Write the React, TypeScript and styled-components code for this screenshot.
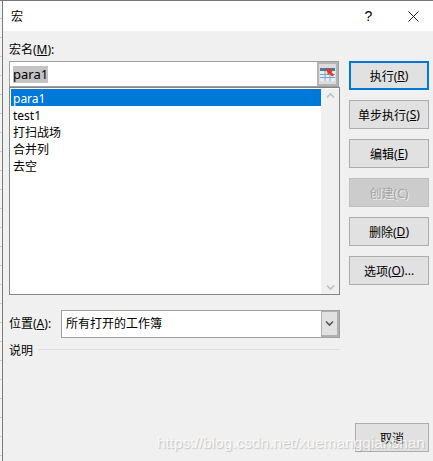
import React from "react";
import styled, { createGlobalStyle } from "styled-components";

const Global = createGlobalStyle`
  html, body { margin: 0; padding: 0; background: #fff; }
  * { box-sizing: border-box; }
`;
const Page = styled.div`
  position: relative; width: 433px; height: 461px; overflow: hidden;
  padding: 1px 0 0 2px;
  background:
    linear-gradient(#777, #777) top / 100% 1px no-repeat,
    repeating-linear-gradient(180deg, #f4f4f4 0 18px, #c8c8c8 18px 19px);
  font-family: "Noto Sans", "Noto Sans CJK SC", sans-serif; font-size: 12px; color: #000;
`;
const Dialog = styled.div`
  width: 431px; height: 460px; display: flex; flex-direction: column;
  background: #f0f0f0; border-left: 1px solid #7a7a7a;
`;
const TitleBar = styled.div`
  height: 30px; flex: none; background: #fff; display: flex; align-items: center; padding: 0 14px 0 8px;
`;
const Title = styled.div`flex: 1; font-size: 12px;`;
const Help = styled.span`font-size: 14px; width: 17px; text-align: center; margin-right: 31px; font-family: "Liberation Sans", sans-serif;`;
const Body = styled.div`flex: 1; display: flex; padding: 11px 4px 9px 6px; gap: 9px;`;
const Left = styled.div`width: 331px; display: flex; flex-direction: column;`;
const FieldLabel = styled.div`height: 19px; line-height: 15px;`;
const NameInput = styled.div`
  height: 26px; display: flex; align-items: center; background: #fff;
  border: 1px solid #a0a0a0; padding-left: 3px; width: 330px; justify-content: space-between;
`;
const Selected = styled.span`background: #c4c4c4; font-size: 13px; line-height: 17px; padding: 0;`;
const Picker = styled.div`
  width: 21px; height: 24px; background: #dcdcdc; border: 2px solid #b4b4b4; display: flex; align-items: center; justify-content: center;
`;
const List = styled.div`
  height: 208px; width: 331px; display: flex; background: #fff; border: 1px solid #82858a; padding: 1px 0 0 1px;
`;
const Items = styled.div`flex: 1; display: flex; flex-direction: column;`;
const Item = styled.div<{ $on?: boolean }>`
  height: 17px; line-height: 19px; padding-left: 2px;
  background: ${p => (p.$on ? "#0078d7" : "transparent")}; color: ${p => (p.$on ? "#fff" : "#000")};
`;
const Scroll = styled.div`
  width: 18px; background: #f0f0f0; display: flex; flex-direction: column; justify-content: space-between; align-items: center; padding: 3px 0;
`;
const LocationRow = styled.div`display: flex; align-items: center; margin-top: 15px; height: 28px;`;
const LocationLabel = styled.div`width: 52px; flex: none; line-height: 15px; margin-bottom: 2px;`;
const Combo = styled.div`
  width: 279px; height: 28px; display: flex; background: #fff; border: 1px solid #a0a0a0; line-height: 25px; padding-left: 4px;
`;
const ComboValue = styled.div`flex: 1;`;
const ComboButton = styled.div`
  width: 18px; background: #e1e1e1; border: 1px solid #b0b0b0; border-bottom-width: 2px; border-right-width: 2px; display: flex; align-items: center; justify-content: center;
`;
const Desc = styled.div`display: flex; align-items: center; gap: 5px; height: 15px; margin-top: 4px;`;
const Rule = styled.div`flex: 1; height: 1px; background: #dcdcdc;`;
const Right = styled.div`flex: 1; display: flex; flex-direction: column; gap: 10px; align-items: flex-end; padding-top: 19px;`;
const Btn = styled.div<{ $primary?: boolean; $off?: boolean; $cancel?: boolean }>`
  height: 29px; width: ${p => (p.$cancel ? 74 : 80)}px; display: flex; align-items: center; justify-content: center;
  background: ${p => (p.$off ? "#cccccc" : "#e1e1e1")};
  border: ${p => (p.$primary ? "2px solid #0078d7" : p.$off ? "1px solid #bfbfbf" : "1px solid #adadad")};
  color: ${p => (p.$off ? "#a3a3a3" : "#000")};
  text-shadow: ${p => (p.$off ? "1px 1px 0 #eee" : "none")};
  margin-top: ${p => (p.$cancel ? "auto" : "0")};
`;
const Key = styled.span`text-decoration: underline;`;
const Watermark = styled.div`
  position: absolute; left: 157px; top: 433px; font-family: "Liberation Sans", sans-serif; font-size: 15.4px; line-height: 20px;
  color: rgba(255,255,255,.8); text-shadow: 1px 1px 1px rgba(150,150,150,.5); white-space: nowrap; pointer-events: none;
`;

const Chev = ({ up, color = "#c0c0c0" }: { up?: boolean; color?: string }) => (
  <svg width="9" height="7" viewBox="0 0 9 7">
    <path d={up ? "M1 5.5L4.5 2L8 5.5" : "M1 1.5L4.5 5L8 1.5"} fill="none" stroke={color} strokeWidth="1.6" />
  </svg>
);
const RangeIcon = () => (
  <svg width="15" height="14" viewBox="0 0 15 14">
    <rect x="0" y="1" width="15" height="13" fill="#e8eef6" />
    <rect x="0" y="1" width="15" height="3" fill="#54759f" />
    <path d="M0 7.5H15M0 10.5H15M5 4V14M10 4V14" stroke="#7fa0c8" strokeWidth="1" />
    <path d="M6 1L13 3.5L11.5 5L14 8L12 9.5L9.5 6.5L8 8Z" fill="#e23a22" />
  </svg>
);

export default function App() {
  return (
    <Page>
      <Global />
      <Dialog>
        <TitleBar>
          <Title>宏</Title>
          <Help>?</Help>
          <svg width="11" height="11" viewBox="0 0 11 11">
            <path d="M.5.5L10.5 10.5M10.5.5L.5 10.5" stroke="#222" strokeWidth="1" />
          </svg>
        </TitleBar>
        <Body>
          <Left>
            <FieldLabel>宏名(<Key>M</Key>):</FieldLabel>
            <NameInput>
              <Selected>para1</Selected>
              <Picker><RangeIcon /></Picker>
            </NameInput>
            <List>
              <Items>
                <Item $on>para1</Item>
                <Item>test1</Item>
                <Item>打扫战场</Item>
                <Item>合并列</Item>
                <Item>去空</Item>
              </Items>
              <Scroll><Chev up /><Chev /></Scroll>
            </List>
            <LocationRow>
              <LocationLabel>位置(<Key>A</Key>):</LocationLabel>
              <Combo>
                <ComboValue>所有打开的工作簿</ComboValue>
                <ComboButton><Chev color="#555" /></ComboButton>
              </Combo>
            </LocationRow>
            <Desc>说明<Rule /></Desc>
          </Left>
          <Right>
            <Btn $primary>执行(<Key>R</Key>)</Btn>
            <Btn>单步执行(<Key>S</Key>)</Btn>
            <Btn>编辑(<Key>E</Key>)</Btn>
            <Btn $off>创建(C)</Btn>
            <Btn>删除(<Key>D</Key>)</Btn>
            <Btn>选项(<Key>O</Key>)...</Btn>
            <Btn $cancel>取消</Btn>
          </Right>
        </Body>
      </Dialog>
      <Watermark>https://blog.csdn.net/xuemangqianshan</Watermark>
    </Page>
  );
}
